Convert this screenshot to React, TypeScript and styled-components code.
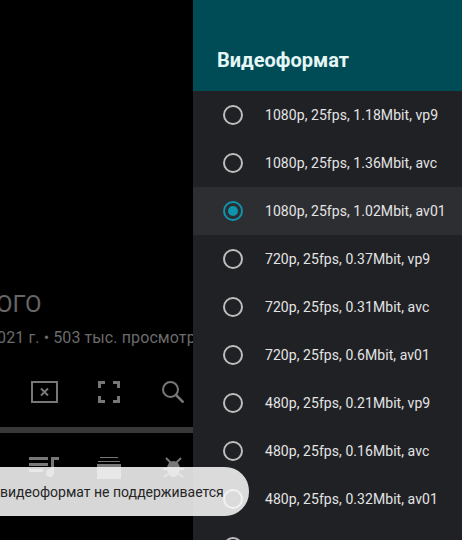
import React from "react";
import styled, { createGlobalStyle } from "styled-components";

const Global = createGlobalStyle`
  html, body { margin: 0; padding: 0; background: #000; }
  body { font-family: Roboto, "Noto Sans", sans-serif; }
`;

const Screen = styled.div`
  position: relative;
  width: 462px;
  height: 540px;
  display: flex;
  overflow: hidden;
  background: #000;
`;

const Player = styled.section`
  width: 193px;
  flex: none;
  height: 540px;
  overflow: hidden;
  display: flex;
  flex-direction: column;
  padding-top: 289px;
  box-sizing: border-box;
`;

const Title = styled.div`
  font-size: 24px;
  line-height: 30px;
  color: #666;
  white-space: nowrap;
  margin-left: -4px;
`;

const Meta = styled.div`
  font-size: 16px;
  line-height: 20px;
  margin-top: 9px;
  margin-left: -12px;
  color: #6b6b6b;
  white-space: nowrap;
  letter-spacing: 0.1px;
`;

const Controls = styled.div`
  display: grid;
  grid-template-columns: repeat(3, 64.5px);
  justify-items: center;
  padding-left: 12px;
  margin-top: 30px;
  height: 28px;
  align-items: center;
`;

const Progress = styled.div`
  height: 6px;
  background: #383838;
  margin-top: 21px;
`;

const Tabs = styled.div`
  display: grid;
  grid-template-columns: repeat(3, 64.5px);
  justify-items: center;
  padding-left: 12px;
  margin-top: 24px;
`;

const Drawer = styled.aside`
  flex: 1;
  height: 540px;
  overflow: hidden;
  background: #202124;
`;

const DrawerHeader = styled.header`
  height: 91px;
  box-sizing: border-box;
  background: #004c56;
  padding: 48px 0 0 24px;
  font-size: 20px;
  line-height: 24px;
  font-weight: 700;
  color: #e6f7f7;
`;

const Row = styled.div<{ $selected?: boolean }>`
  height: 48px;
  display: flex;
  align-items: center;
  padding-left: 30px;
  background: ${(p) => (p.$selected ? "#2d2e31" : "transparent")};
`;

const Radio = styled.span<{ $selected?: boolean }>`
  width: 20px;
  height: 20px;
  box-sizing: border-box;
  flex: none;
  border-radius: 50%;
  border: 2px solid ${(p) => (p.$selected ? "#0e94ad" : "#bdbdbd")};
  display: flex;
  align-items: center;
  justify-content: center;
  &::after {
    content: "";
    display: ${(p) => (p.$selected ? "block" : "none")};
    width: 10px;
    height: 10px;
    border-radius: 50%;
    background: #0e94ad;
  }
`;

const RowLabel = styled.span`
  margin-left: 22px;
  font-size: 14px;
  color: #e4e4e4;
  white-space: nowrap;
  letter-spacing: 0.06px;
`;

const Snackbar = styled.div`
  position: absolute;
  left: -30px;
  top: 467px;
  width: 279px;
  height: 49px;
  border-radius: 0 24px 24px 0;
  background: rgba(250, 250, 250, 0.86);
  display: flex;
  align-items: center;
  box-sizing: border-box;
  padding-left: 30px;
  font-size: 14px;
  color: #262626;
  white-space: nowrap;
`;

const formats = [
  "1080p, 25fps, 1.18Mbit, vp9",
  "1080p, 25fps, 1.36Mbit, avc",
  "1080p, 25fps, 1.02Mbit, av01",
  "720p, 25fps, 0.37Mbit, vp9",
  "720p, 25fps, 0.31Mbit, avc",
  "720p, 25fps, 0.6Mbit, av01",
  "480p, 25fps, 0.21Mbit, vp9",
  "480p, 25fps, 0.16Mbit, avc",
  "480p, 25fps, 0.32Mbit, av01",
  "360p, 25fps, 0.25Mbit, vp9",
];

const grey = "#777";

export default function App() {
  return (
    <Screen>
      <Global />
      <Player>
        <Title>ОГО</Title>
        <Meta>2021 г. • 503 тыс. просмотров</Meta>
        <Controls>
          <svg width="27" height="22" viewBox="0 0 27 22" fill="none">
            <rect x="1" y="1" width="25" height="20" stroke={grey} strokeWidth="2" />
            <path d="M10 7.500l7 7M17 7.500l-7 7" stroke={grey} strokeWidth="2" />
          </svg>
          <svg width="22" height="22" viewBox="0 0 22 22" fill="none">
            <path d="M1.500 7V1.500H7M15 1.500h5.500V7M20.500 15v5.500H15M7 20.500H1.500V15" stroke={grey} strokeWidth="3" />
          </svg>
          <svg width="22" height="22" viewBox="0 0 22 22" fill="none">
            <circle cx="8.500" cy="8.500" r="7.500" stroke={grey} strokeWidth="2" />
            <path d="M14 14l7.500 7.500" stroke={grey} strokeWidth="2.500" />
          </svg>
        </Controls>
        <Progress />
        <Tabs>
          <svg width="30" height="24" viewBox="0 0 30 24" fill={grey}>
            <rect x="0" y="0" width="19" height="3" />
            <rect x="0" y="6" width="19" height="3" />
            <rect x="0" y="12" width="14" height="3" />
            <path d="M22 0h8v3h-5v13a4 4 0 1 1-3-3.800z" />
          </svg>
          <svg width="24" height="24" viewBox="0 0 24 24" fill={grey}>
            <rect x="3" y="0" width="18" height="1" />
            <rect x="1" y="4" width="22" height="1" />
            <rect x="0" y="7" width="24" height="15" />
          </svg>
          <svg width="21" height="24" viewBox="0 0 21 24" fill={grey}>
            <ellipse cx="10.500" cy="12" rx="6.500" ry="8" />
            <path d="M3 1l5 5M18 1l-5 5M0 12h21M1 20l4-3M20 20l-4-3" stroke={grey} strokeWidth="2" />
          </svg>
        </Tabs>
      </Player>
      <Drawer>
        <DrawerHeader>Видеоформат</DrawerHeader>
        {formats.map((f, i) => (
          <Row key={f} $selected={i === 2}>
            <Radio $selected={i === 2} />
            <RowLabel>{f}</RowLabel>
          </Row>
        ))}
      </Drawer>
      <Snackbar>видеоформат не поддерживается</Snackbar>
    </Screen>
  );
}
